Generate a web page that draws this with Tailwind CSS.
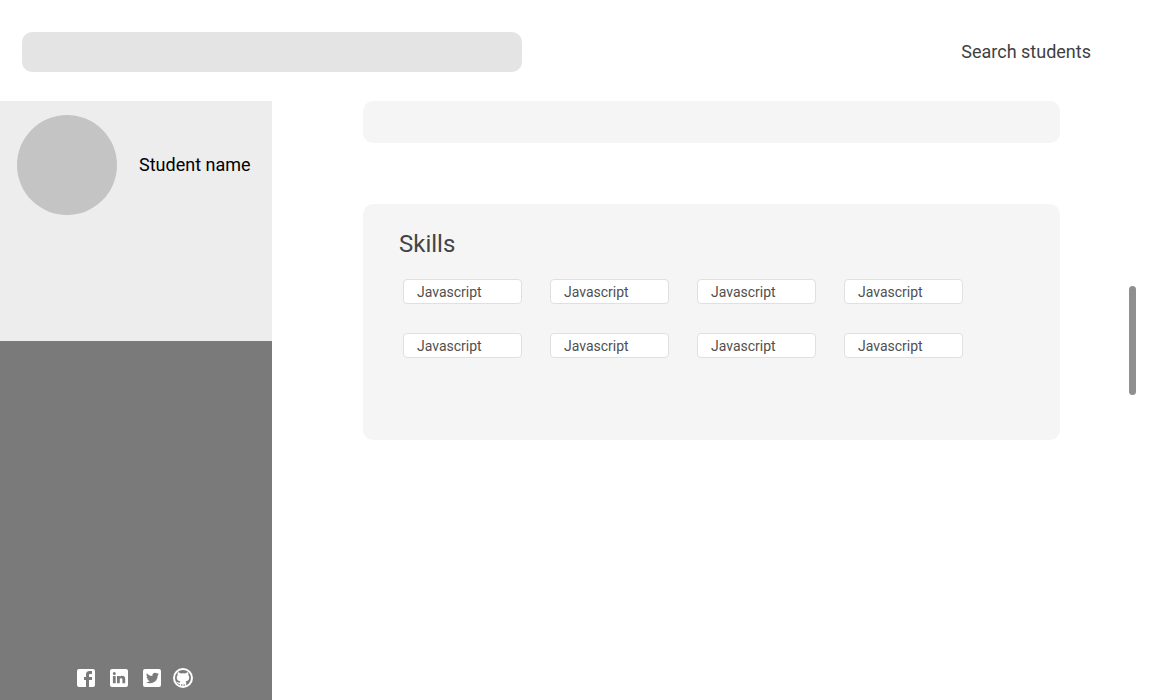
<!DOCTYPE html>
<html lang="en">
<head>
<meta charset="utf-8">
<meta name="viewport" content="width=device-width, initial-scale=1">
<title>Student profile</title>
<script src="https://cdn.jsdelivr.net/npm/@tailwindcss/browser@4"></script>
</head>
<body class="flex min-h-screen flex-col bg-white font-[Roboto,sans-serif]">
<header class="flex items-center justify-between pt-8 pr-[61px] pb-[29px] pl-[22px]">
  <input type="search" aria-label="Search students by name" class="h-10 w-[500px] rounded-[10px] bg-[#e4e4e4] px-4 outline-none">
  <a href="#" class="text-lg leading-6 text-[#3f3f3f]">Search students</a>
</header>
<div class="flex flex-1">
  <aside class="flex w-[272px] shrink-0 flex-col bg-[#7a7a7a]">
    <section class="flex h-60 items-start bg-[#ededed] pt-3.5 pl-[17px]">
      <div class="size-[100px] shrink-0 rounded-full bg-[#c4c4c4]"></div>
      <h1 class="ml-[22px] text-lg leading-[100px] whitespace-nowrap text-black">Student name</h1>
    </section>
    <nav aria-label="Social links" class="mt-auto flex gap-[9px] pb-2.5 pl-[74px] text-white">
      <a href="#" aria-label="Facebook"><svg class="size-6" viewBox="0 0 24 24" fill="currentColor"><path d="M5,3H19A2,2 0 0,1 21,5V19A2,2 0 0,1 19,21H5A2,2 0 0,1 3,19V5A2,2 0 0,1 5,3M18,5H15.5A3.5,3.5 0 0,0 12,8.5V11H10V14H12V21H15V14H18V11H15V9A1,1 0 0,1 16,8H18V5Z"/></svg></a>
      <a href="#" aria-label="LinkedIn"><svg class="size-6" viewBox="0 0 24 24" fill="currentColor"><path d="M19 3A2 2 0 0 1 21 5V19A2 2 0 0 1 19 21H5A2 2 0 0 1 3 19V5A2 2 0 0 1 5 3H19M18.2 17.3V13.2A3.3 3.3 0 0 0 14.9 9.8C14 9.8 13.2 10.3 12.8 11V10H10V17.3H12.8V13.4C12.8 12.7 13.4 12.2 14.1 12.2A1.3 1.3 0 0 1 15.4 13.5V17.3H18.2M7.3 9.1A1.5 1.5 0 0 0 8.8 7.6A1.5 1.5 0 0 0 5.8 7.6A1.5 1.5 0 0 0 7.3 9.1M8.7 17.3V10H5.9V17.3H8.7Z"/></svg></a>
      <a href="#" aria-label="Twitter"><svg class="size-6" viewBox="0 0 24 24" fill="currentColor"><path d="M5,3H19A2,2 0 0,1 21,5V19A2,2 0 0,1 19,21H5A2,2 0 0,1 3,19V5A2,2 0 0,1 5,3M17.71,9.33C18.19,8.93 18.75,8.45 19,7.92C18.59,8.13 18.1,8.26 17.56,8.33C18.06,7.97 18.47,7.5 18.68,6.86C18.16,7.14 17.63,7.38 16.97,7.5C15.42,5.63 11.71,7.15 12.37,9.95C9.76,9.79 8.17,8.61 6.85,7.16C6.1,8.38 6.75,10.23 7.64,10.74C7.18,10.71 6.83,10.57 6.5,10.41C6.54,11.95 7.39,12.69 8.58,13.09C8.22,13.16 7.82,13.18 7.44,13.12C7.81,14.19 8.58,14.86 9.9,15C9,15.76 7.34,16.29 6,16.08C7.15,16.81 8.46,17.39 10.28,17.31C14.69,17.11 17.64,13.95 17.71,9.33Z"/></svg></a>
      <a href="#" aria-label="GitHub" class="-ml-0.5"><svg class="size-6" viewBox="0 0 24 24" fill="currentColor"><circle cx="12" cy="12" r="9" fill="none" stroke="currentColor" stroke-width="2"/><path d="M8.8 20.5V18.1C6.8 18.2 6.5 16.8 5.3 15.8C6.8 15.6 7.4 17 8.9 16.7C9 16.1 9.2 15.8 9.5 15.5C7.3 15.2 5.7 14.2 5.7 11.6C5.7 10.6 6.1 9.7 6.7 9C6.4 8 6.4 7.1 6.9 6.2C8 6.2 9 6.9 9.7 7.5Q12 7 14.3 7.5C15 6.9 16 6.2 17.1 6.2C17.6 7.1 17.6 8 17.3 9C17.9 9.7 18.3 10.6 18.3 11.6C18.3 14.2 16.7 15.2 14.5 15.5C15 16 15.2 16.5 15.2 17.1V20.5H14V18.2H13.2V20.8H12.4V18.2H11.6V20.8H10.8V18.2H10V20.5Z"/></svg></a>
    </nav>
  </aside>
  <main class="flex flex-1 items-start pr-4 pl-[91px]">
    <div class="mr-[69px] flex flex-1 flex-col gap-[61px]">
      <section aria-label="About" class="h-[42px] rounded-[10px] bg-[#f5f5f5]"></section>
      <section class="rounded-[10px] bg-[#f5f5f5] px-9 pt-6 pb-[82px]">
        <h2 class="text-2xl leading-8 text-[#444]">Skills</h2>
        <ul class="mt-[19px] ml-1 flex flex-wrap gap-x-7 gap-y-[29px] text-sm text-[#4f4f4f]">
          <li class="w-[119px] rounded border border-[#e0e0e0] bg-white pt-px pl-[13px] leading-[22px]">Javascript</li>
          <li class="w-[119px] rounded border border-[#e0e0e0] bg-white pt-px pl-[13px] leading-[22px]">Javascript</li>
          <li class="w-[119px] rounded border border-[#e0e0e0] bg-white pt-px pl-[13px] leading-[22px]">Javascript</li>
          <li class="w-[119px] rounded border border-[#e0e0e0] bg-white pt-px pl-[13px] leading-[22px]">Javascript</li>
          <li class="w-[119px] rounded border border-[#e0e0e0] bg-white pt-px pl-[13px] leading-[22px]">Javascript</li>
          <li class="w-[119px] rounded border border-[#e0e0e0] bg-white pt-px pl-[13px] leading-[22px]">Javascript</li>
          <li class="w-[119px] rounded border border-[#e0e0e0] bg-white pt-px pl-[13px] leading-[22px]">Javascript</li>
          <li class="w-[119px] rounded border border-[#e0e0e0] bg-white pt-px pl-[13px] leading-[22px]">Javascript</li>
        </ul>
      </section>
    </div>
    <div aria-hidden="true" class="mt-[185px] h-[109px] w-[7px] rounded-full bg-[#8f8f8f]"></div>
  </main>
</div>
</body>
</html>
